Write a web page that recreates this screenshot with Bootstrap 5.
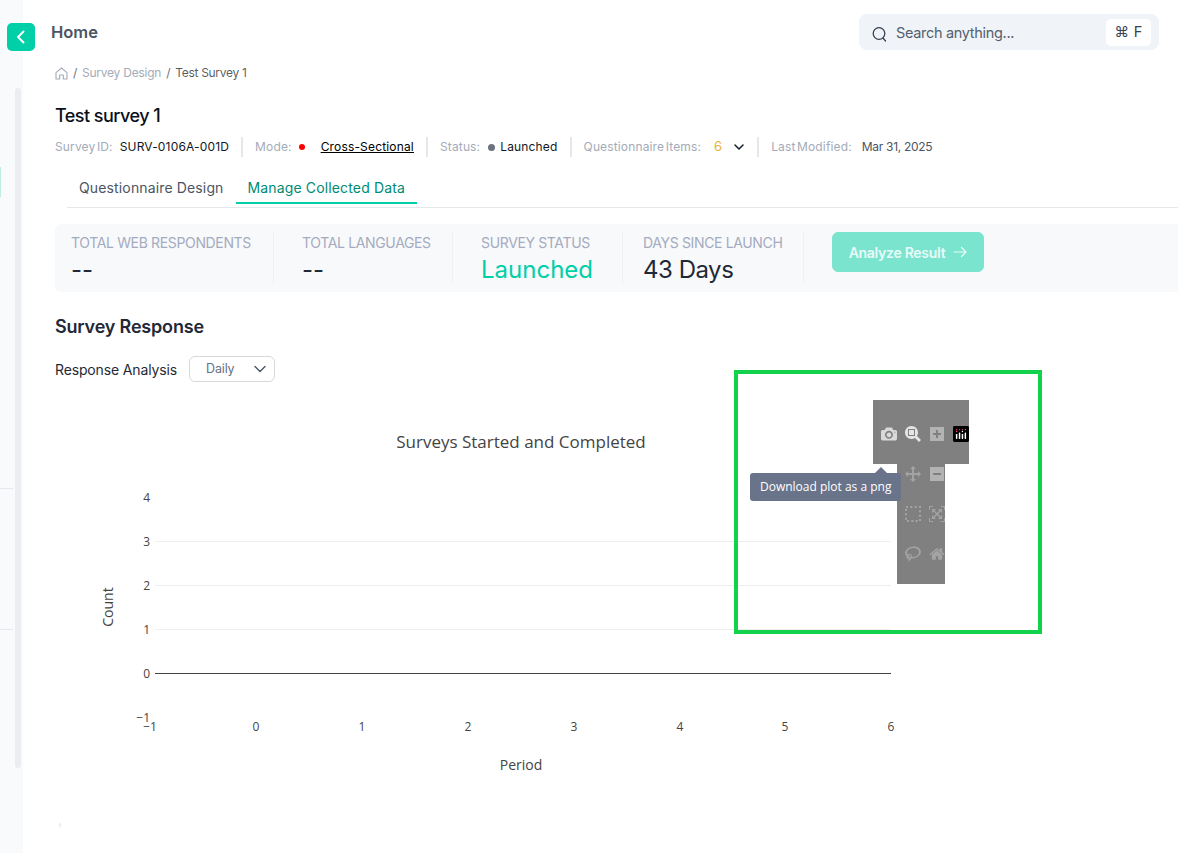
<!DOCTYPE html>
<html lang="en">
<head>
<meta charset="utf-8">
<title>Test survey 1</title>
<link href="https://cdn.jsdelivr.net/npm/bootstrap@5.3.0/dist/css/bootstrap.min.css" rel="stylesheet">
<style>
html,body{height:853px;overflow:hidden;background:#fff}
body{font-family:Inter,"Noto Sans",sans-serif;letter-spacing:-.02em}
.app-shell{height:853px}
.side-rail{width:23px;background:#f8fafc;flex:none;position:relative}
.rail-track{position:absolute;left:15px;top:88px;width:6px;height:680px;background:#ebedf0;border-radius:3px}
.rail-tick{position:absolute;left:0;width:13px;height:1px;background:#e3e7ee}
.tick-one{top:488px}.tick-two{top:629px}
.rail-mark{position:absolute;left:0;top:167px;width:1px;height:30px;background:#bfeee3}
.back-btn{position:absolute;left:7px;top:23px;width:28px;height:28px;background:#00cfa8;border-radius:5px;z-index:2;border:0;padding:0}
.main-pane{padding-left:32px;min-width:0}
.top-head{height:50px;padding-top:14px;padding-right:19px}
.home-label{font-size:16.5px;font-weight:600;color:#4b5563;margin-left:-4px;margin-top:6px;letter-spacing:0}
.search-box{width:300px;height:36px;background:#f0f3f8;border-radius:8px;padding:0 8px 0 13px;color:#555f6e;font-size:14.5px}
.search-text{margin-left:1px;padding-top:1px}
.key-hint{width:45px;height:27px;background:#fff;border-radius:5px;color:#374151;font-size:14.5px;letter-spacing:.02em}
.crumbs{--bs-breadcrumb-margin-bottom:0;--bs-breadcrumb-divider-color:#6b7280;--bs-breadcrumb-item-padding-x:5px;font-size:12px;height:44px;padding-top:14px;color:#4b5563;letter-spacing:-.025em;align-items:flex-start}
.crumbs .crumb-link{color:#a4abb8;letter-spacing:-.02em}
.crumb-home{height:18px}
.crumb-now{color:#4b5563}
.page-title{font-size:18px;font-weight:500;color:#0b0f19;margin:0;height:37px;padding-top:11px;line-height:22px;letter-spacing:-.03em}
.meta-row{font-size:12px;height:34px;margin-top:-1px;color:#111827}
.meta-key{color:#a4abb8;letter-spacing:.012em;word-spacing:-2px}
.meta-val{letter-spacing:.014em}
.meta-date{color:#4b5563;letter-spacing:-.025em;margin-left:10px}
.meta-count{color:#e9b23a;font-size:13px;margin-left:13px;letter-spacing:0}
.meta-chev{margin-left:11px}
.meta-sep{width:2px;height:20px;background:#e5e7eb;margin:0 12px}
.meta-id{margin-right:7px}
.red-dot{width:6px;height:6px;background:#f00;border-radius:50%;margin:0 16px 0 7px}
.grey-dot{width:7px;height:7px;background:#6b7280;border-radius:50%;margin:0 5px 0 8px}
.mode-link{color:#000;text-decoration:underline}
.tabs-row{--bs-nav-link-padding-x:12px;--bs-nav-link-padding-y:0;margin-left:12px;height:35px;margin-top:9px;border-bottom:1px solid #e5e7eb;font-size:14px;letter-spacing:.01em}
.tabs-row .nav-link{height:31px;line-height:30px;color:#4b5563}
.tabs-row .nav-link.active{color:#008a74;border-bottom:2px solid #00cfa8}
.stat-band{height:68px;margin-top:16px;background:#f8f9fb;border-radius:6px 0 0 6px;align-items:flex-start;padding-top:8px}
.stat-cell{height:52px;padding:1px 20px 0 16px;border-right:1px solid #f0f1f4}
.stat-cell.wide-a{width:219px}.stat-cell.wide-b{width:179px;padding-left:28px}.stat-cell.wide-c{width:170px;padding-left:28px}.stat-cell.wide-d{width:181px;padding-left:20px}
.stat-name{font-size:14px;color:#a4abc0;line-height:20px;white-space:nowrap;letter-spacing:-.025em}
.stat-value{font-size:24px;line-height:30px;margin-top:2px;color:#1f2937;white-space:nowrap;letter-spacing:0}
.stat-value.teal{color:#00cfa8}
.stat-value.days{letter-spacing:-.02em}
.go-btn{--bs-btn-bg:#7be4cf;--bs-btn-color:#e9fbf7;--bs-btn-border-color:#7be4cf;--bs-btn-disabled-bg:#7be4cf;--bs-btn-disabled-border-color:#7be4cf;--bs-btn-disabled-color:#e9fbf7;--bs-btn-disabled-opacity:1;width:152px;height:40px;margin-left:28px;font-size:14px;font-weight:600;border-radius:6px;padding:0;letter-spacing:-.02em}
.section-title{font-size:18px;font-weight:600;color:#1f2937;margin:22px 0 0;line-height:26px;letter-spacing:-.01em}
.filter-row{margin-top:16px;font-size:14px;color:#1f2937;height:26px;letter-spacing:-.01em}
.daily-pick{width:86px;height:26px;border:1px solid #d6d8de;border-radius:6px;margin-left:12px;padding:0 7px 0 16px;font-size:12.5px;color:#667085}
.plot-stage{position:relative;width:1123px;height:471px;margin-top:10px}
.plot-stage svg.plot-svg{display:block;font-family:"Open Sans",sans-serif;letter-spacing:0}
.focus-frame{position:absolute;left:679px;top:-22px;width:308px;height:264px;border:4px solid #12d14b}
.mode-bar{position:absolute;left:818px;top:8px;width:96px;height:184px}
.mode-top{height:64px;width:96px;background:#808080;padding:26px 0 0 8px;gap:8px}
.mode-low{height:120px;width:48px;margin-left:24px;background:#808080;padding:2px 0 0 8px;column-gap:8px;row-gap:24px;flex-wrap:wrap;align-content:flex-start}
.mode-ico{width:16px;height:16px;display:block;flex:none}
.ico-bright{fill:#d9d9d9}.ico-brighter{fill:#e4e4e4}.ico-mid{fill:#b3b3b3}.ico-dim{fill:#a3a3a3}
.mode-tip{position:absolute;left:695px;top:81px;width:151px;height:28px;background:#69738a;border-radius:3px;color:#fff;font:12px/28px "Open Sans",sans-serif;letter-spacing:0;padding-left:10px;white-space:nowrap}
.mode-tip::before{content:"";position:absolute;left:125px;top:-6px;border:6px solid transparent;border-top:0;border-bottom-color:#69738a}
.stray-mark{position:absolute;left:58px;top:822px;border:3px solid transparent;border-left:0;border-right-color:#eceef1}
</style>
</head>
<body>
<div class="app-shell d-flex">
  <aside class="side-rail">
    <div class="rail-mark"></div>
    <div class="rail-track"></div>
    <div class="rail-tick tick-one"></div>
    <div class="rail-tick tick-two"></div>
  </aside>
  <button class="back-btn d-flex align-items-center justify-content-center" aria-label="Back">
    <svg width="14" height="16" viewBox="0 0 14 16" fill="none" stroke="#fff" stroke-width="2" stroke-linecap="round" stroke-linejoin="round"><path d="M9.5 2.5 4 8l5.5 5.500"/></svg>
  </button>
  <main class="main-pane flex-grow-1">
    <header class="top-head d-flex justify-content-between">
      <div class="home-label">Home</div>
      <div class="search-box d-flex align-items-center">
        <svg class="me-2 mt-1" width="15" height="16" viewBox="0 0 15 16" fill="none" stroke="#374151" stroke-width="1.3" stroke-linecap="round"><circle cx="7" cy="7.500" r="5.800"/><path d="m11 12 2.500 3"/></svg>
        <span class="flex-grow-1 search-text">Search anything...</span>
        <span class="key-hint d-flex align-items-center justify-content-center">⌘ F</span>
      </div>
    </header>
    <nav aria-label="breadcrumb">
      <ol class="breadcrumb crumbs">
        <li class="breadcrumb-item crumb-home d-flex align-items-center">
          <svg width="13" height="13" viewBox="0 0 13 13" fill="none" stroke="#a4abb8" stroke-width="1.100" stroke-linejoin="round"><path d="M1 5.600 6.500 1 12 5.600V12H8.300V8H4.700v4H1z"/></svg>
        </li>
        <li class="breadcrumb-item"><span class="crumb-link">Survey Design</span></li>
        <li class="breadcrumb-item active crumb-now">Test Survey 1</li>
      </ol>
    </nav>
    <h1 class="page-title">Test survey 1</h1>
    <div class="meta-row d-flex align-items-center">
      <span class="meta-key meta-id">Survey ID:</span><span class="meta-val">SURV-0106A-001D</span>
      <span class="meta-sep"></span>
      <span class="meta-key">Mode:</span><span class="red-dot"></span><span class="mode-link meta-val">Cross-Sectional</span>
      <span class="meta-sep"></span>
      <span class="meta-key">Status:</span><span class="grey-dot"></span><span class="meta-val">Launched</span>
      <span class="meta-sep"></span>
      <span class="meta-key">Questionnaire Items:</span><span class="meta-count">6</span>
      <svg class="meta-chev" width="12" height="12" viewBox="0 0 12 12" fill="none" stroke="#111827" stroke-width="1.500" stroke-linecap="round" stroke-linejoin="round"><path d="m2 4 4 4 4-4"/></svg>
      <span class="meta-sep"></span>
      <span class="meta-key">Last Modified:</span><span class="meta-date">Mar 31, 2025</span>
    </div>
    <ul class="nav tabs-row">
      <li class="nav-item"><a class="nav-link" href="#">Questionnaire Design</a></li>
      <li class="nav-item"><a class="nav-link active" href="#">Manage Collected Data</a></li>
    </ul>
    <section class="stat-band d-flex">
      <div class="stat-cell wide-a"><div class="stat-name">TOTAL WEB RESPONDENTS</div><div class="stat-value">--</div></div>
      <div class="stat-cell wide-b"><div class="stat-name">TOTAL LANGUAGES</div><div class="stat-value">--</div></div>
      <div class="stat-cell wide-c"><div class="stat-name">SURVEY STATUS</div><div class="stat-value teal">Launched</div></div>
      <div class="stat-cell wide-d"><div class="stat-name">DAYS SINCE LAUNCH</div><div class="stat-value days">43 Days</div></div>
      <button class="btn go-btn d-flex align-items-center justify-content-center gap-2" disabled>Analyze Result
        <svg width="14" height="12" viewBox="0 0 14 12" fill="none" stroke="#e9fbf7" stroke-width="1.200" stroke-linecap="round" stroke-linejoin="round"><path d="M1 6h12M8.500 1.500 13 6l-4.500 4.500"/></svg>
      </button>
    </section>
    <h2 class="section-title">Survey Response</h2>
    <div class="filter-row d-flex align-items-center">
      <span>Response Analysis</span>
      <div class="daily-pick d-flex align-items-center justify-content-between">
        <span>Daily</span>
        <svg width="14" height="14" viewBox="0 0 14 14" fill="none" stroke="#4b5563" stroke-width="1.400" stroke-linecap="round" stroke-linejoin="round"><path d="m2 4.500 5 5 5-5"/></svg>
      </div>
    </div>
    <div class="plot-stage">
      <svg class="plot-svg" width="1123" height="471" viewBox="55 392 1123 471">
        <g stroke="#eee" stroke-width="1"><path d="M155 541.500H891M155 585.500H891M155 629.500H891"/></g>
        <path d="M155 673.500H891" stroke="#444" stroke-width="1"/>
        <text x="521" y="448" text-anchor="middle" font-size="17" fill="#444">Surveys Started and Completed</text>
        <g font-size="12" fill="#444" text-anchor="end">
          <text x="150" y="502">4</text><text x="150" y="546">3</text><text x="150" y="590">2</text><text x="150" y="634">1</text><text x="150" y="678">0</text><text x="150" y="722">−1</text>
        </g>
        <g font-size="12" fill="#444" text-anchor="middle">
          <text x="150" y="731">−1</text><text x="256" y="731">0</text><text x="362" y="731">1</text><text x="468" y="731">2</text><text x="574" y="731">3</text><text x="680" y="731">4</text><text x="785" y="731">5</text><text x="891" y="731">6</text>
        </g>
        <text x="521" y="770" text-anchor="middle" font-size="14" fill="#444">Period</text>
        <text transform="translate(113 607) rotate(-90)" text-anchor="middle" font-size="14" fill="#444">Count</text>
      </svg>
      <div class="focus-frame"></div>
      <div class="mode-bar">
        <div class="mode-top d-flex">
          <svg class="mode-ico ico-bright" viewBox="0 0 1000 1000"><path transform="matrix(1 0 0 -1 0 850)" d="m500 450c-83 0-150-67-150-150 0-83 67-150 150-150 83 0 150 67 150 150 0 83-67 150-150 150z m400 150h-120c-16 0-34 13-39 29l-31 93c-6 15-23 28-40 28h-340c-16 0-34-13-39-28l-31-94c-6-15-23-28-40-28h-120c-55 0-100-45-100-100v-450c0-55 45-100 100-100h800c55 0 100 45 100 100v450c0 55-45 100-100 100z m-400-550c-138 0-250 112-250 250 0 138 112 250 250 250 138 0 250-112 250-250 0-138-112-250-250-250z m365 380c-19 0-35 16-35 35 0 19 16 35 35 35 19 0 35-16 35-35 0-19-16-35-35-35z"/></svg>
          <svg class="mode-ico ico-brighter" viewBox="0 0 1000 1000"><path transform="matrix(1 0 0 -1 0 850)" d="m1000-25l-250 251c40 63 63 138 63 218 0 224-182 406-407 406-224 0-406-182-406-406s183-406 407-406c80 0 155 22 218 62l250-250 125 125z m-812 250l0 438 437 0 0-438-437 0z m62 375l313 0 0-312-313 0 0 312z"/></svg>
          <svg class="mode-ico ico-mid" viewBox="0 0 875 1000"><path transform="matrix(1 0 0 -1 0 850)" d="m1 787l0-875 875 0 0 875-875 0z m687-500l-187 0 0-187-125 0 0 187-188 0 0 125 188 0 0 187 125 0 0-187 187 0 0-125z"/></svg>
          <svg class="mode-ico" viewBox="0 0 132 132"><rect width="132" height="132" rx="12" fill="#000"/><g fill="#fff"><rect x="24" y="66" width="12" height="42" rx="4"/><rect x="48" y="54" width="12" height="54" rx="4"/><rect x="72" y="66" width="12" height="42" rx="4"/><rect x="96" y="54" width="12" height="54" rx="4"/></g><g fill="#ef3d7b"><circle cx="30" cy="30" r="6"/><circle cx="54" cy="30" r="6"/><circle cx="78" cy="30" r="6"/></g><circle cx="102" cy="30" r="6" fill="#3f9fde"/><circle cx="30" cy="46" r="6" fill="#ef3d7b"/><circle cx="78" cy="46" r="6" fill="#fff"/></svg>
        </div>
        <div class="mode-low d-flex">
          <svg class="mode-ico ico-dim" viewBox="0 0 1000 1000"><path transform="matrix(1 0 0 -1 0 850)" d="m1000 350l-187 188 0-125-250 0 0 250 125 0-188 187-187-187 125 0 0-250-250 0 0 125-188-188 186-187 0 125 252 0 0-250-125 0 187-188 188 188-125 0 0 250 250 0 0-126 187 188z"/></svg>
          <svg class="mode-ico ico-mid" viewBox="0 0 875 1000"><path transform="matrix(1 0 0 -1 0 850)" d="m0 788l0-876 875 0 0 876-875 0z m688-500l-500 0 0 125 500 0 0-125z"/></svg>
          <svg class="mode-ico" viewBox="0 0 16 16" fill="none" stroke="#a3a3a3" stroke-width="2"><rect x="1" y="1" width="14" height="14" stroke-dasharray="2 2.330"/></svg>
          <svg class="mode-ico ico-dim" viewBox="0 0 1000 1000"><path transform="matrix(1 0 0 -1 0 850)" d="M250 850l-187 0-63 0 0-62 0-188 63 0 0 188 187 0 0 62z m688 0l-188 0 0-62 188 0 0-188 62 0 0 188 0 62-62 0z m-875-938l0 188-63 0 0-188 0-62 63 0 187 0 0 62-187 0z m875 188l0-188-188 0 0-62 188 0 62 0 0 62 0 188-62 0z m-125 188l-1 0-93-94-156 156 156 156 92-93 2 0 0 250-250 0 0-2 93-92-156-156-156 156 94 92 0 2-250 0 0-250 0 0 93 93 157-156-157-156-93 94 0 0 0-250 250 0 0 0-94 93 156 157 156-157-93-93 0 0 250 0 0 250z"/></svg>
          <svg class="mode-ico ico-dim" viewBox="0 0 1031 1000"><path transform="matrix(1 0 0 -1 0 850)" d="m1018 538c-36 207-290 336-568 286-277-48-473-256-436-463 10-57 36-108 76-151-13-66 11-137 68-183 34-28 75-41 114-42l-55-70 0 0c-2-1-3-2-4-3-10-14-8-34 5-45 14-11 34-8 45 4 1 1 2 3 2 5l0 0 113 140c16 11 31 24 45 40 4 3 6 7 8 11 48-3 100 0 151 9 278 48 473 255 436 462z m-624-379c-80 14-149 48-197 96 42 42 109 47 156 9 33-26 47-66 41-105z m-187-74c-19 16-33 37-39 60 50-32 109-55 174-68-42-25-95-24-135 8z m360 75c-34-7-69-9-102-8 8 62-16 128-68 170-73 59-175 54-244-5-9 20-16 40-20 61-28 159 121 317 333 354s407-60 434-217c28-159-121-318-333-355z"/></svg>
          <svg class="mode-ico ico-dim" viewBox="0 0 928.600 1000"><path transform="matrix(1 0 0 -1 0 850)" d="m786 296v-267q0-15-11-26t-25-10h-214v214h-143v-214h-214q-15 0-25 10t-11 26v267q0 1 0 2t0 2l321 264 321-264q1-1 1-4z m124 39l-34-41q-5-5-12-6h-2q-7 0-12 3l-386 322-386-322q-7-4-13-4-7 2-12 7l-35 41q-4 5-3 13t6 12l401 334q18 15 42 15t43-15l136-114v109q0 8 5 13t13 5h107q8 0 13-5t5-13v-227l122-102q5-5 6-12t-4-13z"/></svg>
        </div>
      </div>
      <div class="mode-tip">Download plot as a png</div>
    </div>
  </main>
</div>
<div class="stray-mark"></div>
<script src="https://cdn.jsdelivr.net/npm/bootstrap@5.3.0/dist/js/bootstrap.bundle.min.js"></script>
</body>
</html>
